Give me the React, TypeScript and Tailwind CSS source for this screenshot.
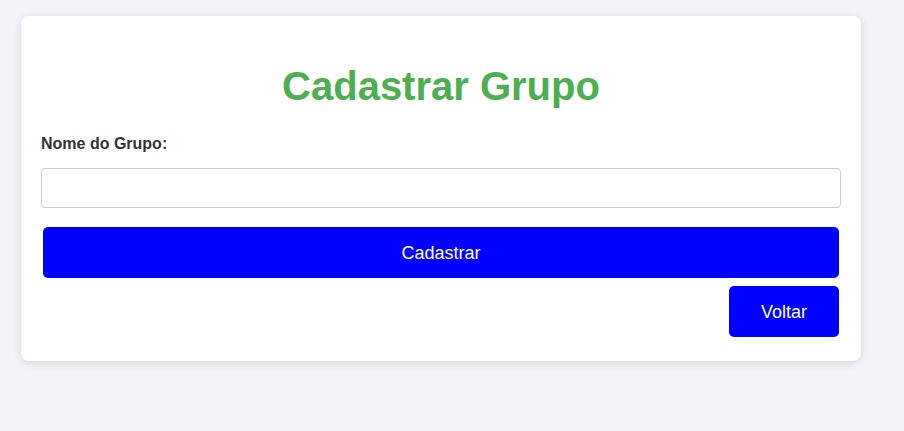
export default function App() {
  return (
    <div className="min-h-[431px] bg-[#f4f4f8] pt-4 pl-[21px] font-['Liberation_Sans',Arial,sans-serif]">
      <div className="w-[840px] rounded-lg bg-white p-5 shadow-[0_2px_8px_rgba(0,0,0,0.12)]">
        <h1 className="mt-[27px] mb-[26px] text-center text-[40px] leading-[46px] font-bold text-[#4caf50]">
          Cadastrar Grupo
        </h1>
        <label className="block text-base leading-[18px] font-bold text-[#333]">Nome do Grupo:</label>
        <input
          type="text"
          className="mt-[15px] block h-10 w-full rounded border border-[#ccc] px-2.5 text-base outline-none"
        />
        <button className="mx-[2px] mt-[19px] flex h-[51px] w-[796px] items-center justify-center rounded-[5px] bg-[#0000ff] text-lg text-white">
          Cadastrar
        </button>
        <div className="flex justify-end pr-[2px]">
          <button className="mt-[8px] mb-[4px] flex h-[51px] w-[110px] items-center justify-center rounded-[5px] bg-[#0000ff] text-lg text-white">
            Voltar
          </button>
        </div>
      </div>
    </div>
  );
}
